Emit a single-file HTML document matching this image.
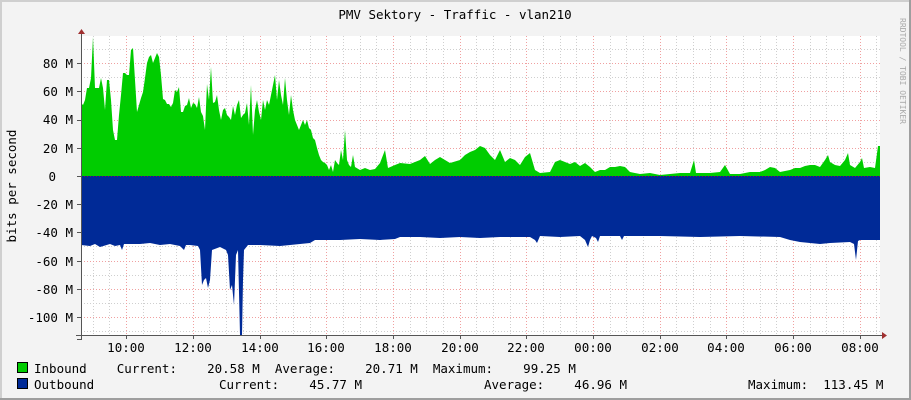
<!DOCTYPE html>
<html><head><meta charset="utf-8"><style>
html,body{margin:0;padding:0;background:#f3f3f3}
svg{display:block}
text{font-family:"DejaVu Sans Mono","Liberation Mono",monospace;font-size:12.5px;fill:#000}
</style></head><body>
<svg width="911" height="400" viewBox="0 0 911 400" xmlns="http://www.w3.org/2000/svg">
<rect x="0" y="0" width="911" height="400" fill="#f3f3f3"/>
<rect x="0" y="0" width="911" height="2" fill="#cfcfcf"/>
<rect x="0" y="0" width="2" height="400" fill="#cfcfcf"/>
<rect x="0" y="398" width="911" height="2" fill="#9e9e9e"/>
<rect x="909" y="0" width="2" height="400" fill="#9e9e9e"/>
<rect x="81" y="36" width="799" height="299" fill="#fff"/>
<g stroke="#cfcfcf" stroke-width="1" stroke-dasharray="1,2">
<path d="M81 49.5H880M81 77.5H880M81 105.5H880M81 133.5H880M81 162.5H880M81 190.5H880M81 218.5H880M81 246.5H880M81 275.5H880M81 303.5H880M81 331.5H880"/>
<path d="M93.5 36V335M109.5 36V335M143.5 36V335M160.5 36V335M176.5 36V335M209.5 36V335M226.5 36V335M243.5 36V335M276.5 36V335M293.5 36V335M310.5 36V335M343.5 36V335M360.5 36V335M376.5 36V335M410.5 36V335M426.5 36V335M443.5 36V335M476.5 36V335M493.5 36V335M510.5 36V335M543.5 36V335M560.5 36V335M576.5 36V335M610.5 36V335M626.5 36V335M643.5 36V335M676.5 36V335M693.5 36V335M710.5 36V335M743.5 36V335M760.5 36V335M776.5 36V335M810.5 36V335M826.5 36V335M843.5 36V335M876.5 36V335"/>
</g>
<g stroke="#f0a0a0" stroke-width="1" stroke-dasharray="1,2">
<path d="M81 63.5H880M81 91.5H880M81 120.5H880M81 148.5H880M81 176.5H880M81 204.5H880M81 232.5H880M81 261.5H880M81 289.5H880M81 317.5H880"/>
<path d="M126.5 36V335M193.5 36V335M260.5 36V335M326.5 36V335M393.5 36V335M460.5 36V335M526.5 36V335M593.5 36V335M660.5 36V335M726.5 36V335M793.5 36V335M860.5 36V335"/>
</g>
<polygon fill="#00cc00" points="81,176 81,103 83,105 85,100 87,88 89,88 91,78 93,37 95,88 99,88 101,78 103,88 105,110 107,80 109,80 111,100 113,130 115,140 117,140 119,115 121,95 123,73 125,73 127,75 129,75 131,50 133,48 135,80 137,112 139,105 141,98 143,92 145,78 147,63 149,57 151,55 153,63 155,58 157,53 159,57 161,75 163,99 165,100 167,104 169,104 171,107 173,103 175,90 177,92 179,87 181,112 183,112 185,106 187,105 189,98 191,108 193,103 195,104 197,108 199,97 201,112 203,116 205,130 207,84 209,100 211,67 213,103 215,102 217,95 219,110 221,120 223,110 225,108 227,115 229,117 231,120 233,106 235,115 237,105 239,100 241,118 243,115 245,113 247,103 249,125 251,85 253,135 255,110 257,100 259,112 261,120 263,100 265,110 267,100 269,105 271,95 273,85 275,75 277,100 279,80 281,95 283,105 285,78 287,100 289,115 291,95 293,110 295,120 297,125 299,130 301,125 303,120 305,125 307,120 309,128 311,130 313,138 315,140 317,148 319,155 321,160 323,162 325,163 327,165 329,170 331,165 333,172 335,160 337,163 339,165 341,150 343,160 345,130 347,160 349,165 351,167 353,155 355,167 360,170 365,168 370,170 375,169 380,163 385,150 388,168 395,165 400,163 410,164 420,160 425,156 430,164 435,160 440,157 445,160 450,163 460,160 465,155 470,152 475,150 480,146 485,148 490,155 495,160 500,150 505,162 510,158 515,160 520,165 525,157 530,153 535,170 540,173 550,172 555,162 560,160 565,162 570,164 575,162 580,166 585,163 590,167 595,172 600,170 605,170 610,167 615,167 620,166 625,167 630,172 640,174 650,173 660,175 670,174 680,173 690,173 694,160 696,173 710,173 720,172 725,165 730,174 740,174 750,172 760,172 765,170 770,167 775,168 780,172 790,170 795,168 800,168 805,166 810,165 815,165 820,167 825,160 828,155 830,162 835,165 840,166 845,160 848,153 850,165 855,168 860,162 862,158 864,168 870,167 875,168 878,146 880,146 880,176"/>
<polygon fill="#002a97" points="81,176 81,245 90,246 95,244 100,247 110,244 115,246 120,245 122,250 124,244 140,244 150,243 160,245 170,244 180,246 184,250 186,245 190,245 198,246 200,250 202,285 204,280 206,278 208,288 210,280 212,250 220,247 226,250 228,255 230,290 232,285 234,305 236,255 238,250 240,335 242,335 243,280 244,250 248,245 260,245 280,246 300,244 310,243 315,240 340,240 360,239 380,240 395,239 400,237 420,237 440,238 460,237 480,238 500,237 520,237 530,237 535,240 537,243 540,236 560,237 580,236 585,240 588,247 590,240 592,236 596,238 598,242 600,236 620,236 622,240 624,236 660,236 700,237 740,236 780,237 790,240 800,242 810,243 820,244 830,243 850,242 854,244 856,260 858,241 860,240 880,240 880,176"/>
<path d="M81 176.5H880" stroke="#e00" stroke-width="1" stroke-dasharray="1,2" opacity="0.5"/>
<path d="M81.5 32V340M76 335.5H885" stroke="#555" stroke-width="1"/>
<path d="M77 339.5h4M77 317.5h4M77 289.5h4M77 261.5h4M77 232.5h4M77 204.5h4M77 176.5h4M77 148.5h4M77 120.5h4M77 91.5h4M77 63.5h4" stroke="#555"/>
<path d="M126.5 335v4M193.5 335v4M260.5 335v4M326.5 335v4M393.5 335v4M460.5 335v4M526.5 335v4M593.5 335v4M660.5 335v4M726.5 335v4M793.5 335v4M860.5 335v4" stroke="#555"/>
<polygon points="78,34 85,34 81.5,29" fill="#a03030"/>
<polygon points="882,332 882,339 887,335.5" fill="#a03030"/>
<text x="455" y="19" text-anchor="middle">PMV Sektory - Traffic - vlan210</text>
<text transform="translate(16,186) rotate(-90)" text-anchor="middle">bits per second</text>
<g text-anchor="end">
<text x="73" y="68">80 M</text><text x="73" y="96">60 M</text><text x="73" y="124">40 M</text><text x="73" y="153">20 M</text><text x="56" y="181">0</text><text x="73" y="209">-20 M</text><text x="73" y="237">-40 M</text><text x="73" y="266">-60 M</text><text x="73" y="294">-80 M</text><text x="73" y="322">-100 M</text>
</g>
<g text-anchor="middle">
<text x="126" y="352">10:00</text><text x="193" y="352">12:00</text><text x="260" y="352">14:00</text><text x="326" y="352">16:00</text><text x="393" y="352">18:00</text><text x="460" y="352">20:00</text><text x="526" y="352">22:00</text><text x="593" y="352">00:00</text><text x="660" y="352">02:00</text><text x="726" y="352">04:00</text><text x="793" y="352">06:00</text><text x="860" y="352">08:00</text>
</g>
<text transform="translate(900,18) rotate(90)" style="font-size:8px;fill:#aaa">RRDTOOL / TOBI OETIKER</text>
<rect x="17.5" y="362.5" width="10" height="10" fill="#00cc00" stroke="#000"/>
<rect x="17.5" y="378.5" width="10" height="10" fill="#002a97" stroke="#000"/>
<text x="34" y="373" xml:space="preserve">Inbound    Current:    20.58 M  Average:    20.71 M  Maximum:    99.25 M</text>
<text x="34" y="389">Outbound</text>
<text x="219" y="389" xml:space="preserve">Current:    45.77 M</text>
<text x="484" y="389" xml:space="preserve">Average:    46.96 M</text>
<text x="748" y="389" xml:space="preserve">Maximum:  113.45 M</text>
</svg>
</body></html>
